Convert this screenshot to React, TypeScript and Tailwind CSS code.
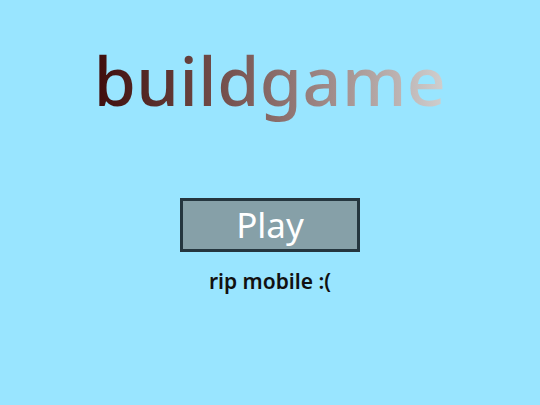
export default function App() {
  return (
    <div
      className="w-[540px] h-[405px] bg-[#99e5ff] flex flex-col items-center"
      style={{ fontFamily: '"Noto Sans", "Open Sans", sans-serif' }}
    >
      {/* title with a left-to-right colour fade */}
      <h1 className="mt-[30px] text-[68px] leading-[100px] tracking-[0.5px] font-medium bg-gradient-to-r from-[#3e0c0c] to-[#d0d0d0] bg-clip-text text-transparent">
        buildgame
      </h1>
      <button className="mt-[68px] w-[180px] h-[54px] border-[3px] border-[#25363f] bg-[#86a0a8] text-white text-[35px] leading-none pb-[2px]">
        Play
      </button>
      <p className="mt-[14px] text-[21px] font-semibold text-[#111]">rip mobile :(</p>
    </div>
  );
}
